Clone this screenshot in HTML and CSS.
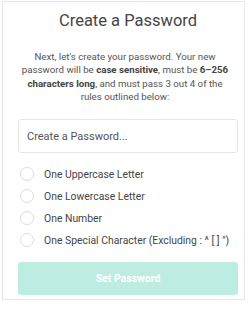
FILE: index.html
```html
<!DOCTYPE html>
<html>
<head>
    <meta charset="UTF-8">
    <meta name="viewport" content="width=device-width" />
    <title>Create a Password</title>
    <link rel="stylesheet" href="styles.css">
</head>
<body>
    <div class="card">
        <h1 class="title">Create a Password</h1>
        <p class="intro">Next, let's create your password. Your new<br>password will be <b>case sensitive</b>, must be <b>6&#8211;256</b><br><b>characters long</b>, and must pass 3 out 4 of the<br>rules outlined below:</p>
        <input class="password" type="text" placeholder="Create a Password...">
        <ul class="rules">
            <li><span class="radio"></span>One Uppercase Letter</li>
            <li><span class="radio"></span>One Lowercase Letter</li>
            <li><span class="radio"></span>One Number</li>
            <li><span class="radio"></span>One Special Character (Excluding : ^ [ ] ")</li>
        </ul>
        <button class="submit" disabled>Set Password</button>
    </div>
</body>
</html>
```

FILE: styles.css
```css
html {
    font-family: Roboto, "Liberation Sans", sans-serif;
    box-sizing: border-box;
}

*,
*:before,
*:after {
    box-sizing: inherit;
}

body {
    margin: 0;
    padding: 1px 4px 0 2px;
    background: white;
}

.card {
    border: 1px solid #e6e6e6;
    height: 299px;
    padding: 0 6px 0 15px;
    display: flex;
    flex-direction: column;
}

.title {
    margin: 9px 0 0;
    font-size: 16.5px;
    font-weight: 400;
    line-height: 20px;
    color: #444;
    text-align: center;
}

.intro {
    margin: 19px 0 0;
    padding: 0 6px 0 0;
    font-size: 9.7px;
    line-height: 13.3px;
    color: #555;
    text-align: center;
}

.intro b {
    font-weight: 700;
    color: #444;
}

.password {
    margin-top: 16px;
    height: 34px;
    width: 100%;
    border: 1px solid #e4e4e4;
    border-radius: 3px;
    padding: 0 8px;
    font-family: inherit;
    font-size: 11px;
    color: #555;
}

.password::placeholder {
    color: #555;
}

.rules {
    list-style: none;
    margin: 10px 0 0;
    padding: 0;
}

.rules li {
    height: 22px;
    display: flex;
    align-items: center;
    font-size: 10.4px;
    color: #444;
    white-space: nowrap;
}

.radio {
    flex-shrink: 0;
    width: 14px;
    height: 14px;
    border: 1px solid #dcdcdc;
    border-radius: 50%;
    margin: 0 10px 0 2px;
}

.submit {
    margin-top: 11px;
    height: 33px;
    width: 100%;
    border: 0;
    border-radius: 3px;
    background: #bdede2;
    color: white;
    font-family: inherit;
    font-size: 10.5px;
    font-weight: 700;
}
```
